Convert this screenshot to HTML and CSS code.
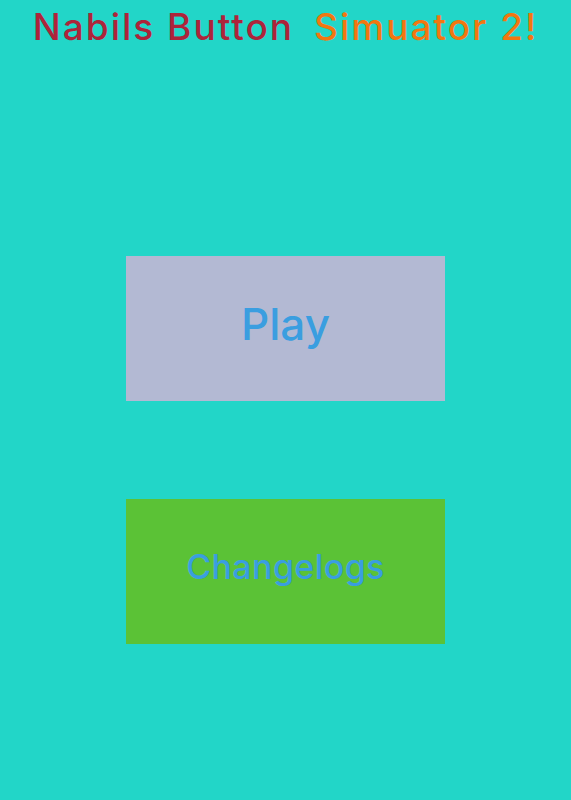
FILE: index.html
```html
<!DOCTYPE html>
<html>
<head>
<meta charset="utf-8">
<link rel="stylesheet" href="styles.css">
</head>
<body>
<div class="page">
  <h1 class="title"><span class="red">Nabils Button</span><span class="orange">Simuator 2!</span></h1>
  <div class="btn play"><span class="label">Play</span></div>
  <div class="btn changelogs"><span class="label">Changelogs</span></div>
</div>
</body>
</html>
```
FILE: styles.css
```css
html, body {
  margin: 0;
  padding: 0;
  background: #22d6c8;
  height: 100%;
}
.page {
  display: flex;
  flex-direction: column;
  align-items: center;
  font-family: Inter, "DejaVu Sans", sans-serif;
}
.title {
  margin: 0;
  padding-top: 4px;
  font-size: 37px;
  font-weight: 500;
  line-height: 46px;
  display: flex;
  gap: 20px;
  letter-spacing: 2px;
}
.red { color: #ad243a; }
.orange { color: #f27710; }
.btn {
  width: 319px;
  height: 145px;
  display: flex;
  align-items: center;
  justify-content: center;
  color: #3a9ee0;
  font-weight: 500;
}
.label {
  margin-bottom: 10px;
}
.play {
  margin-top: 206px;
  background: #b3b9d3;
  font-size: 44px;
  letter-spacing: 0px;
}
.changelogs {
  margin-top: 98px;
  background: #5bc236;
  font-size: 34px;
  letter-spacing: 0.4px;
}
```
